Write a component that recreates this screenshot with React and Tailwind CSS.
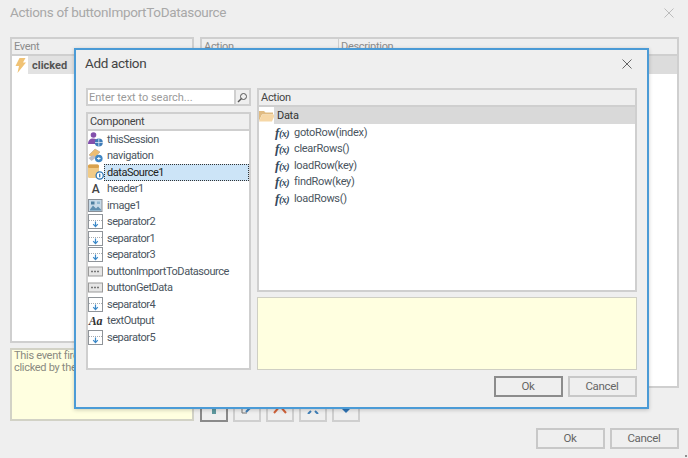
function Sep() {
  return (
    <svg width="15" height="15" viewBox="0 0 15 15" className="shrink-0">
      <rect x="0.5" y="0.5" width="14" height="14" fill="#fff" stroke="#8f9499" />
      <path d="M1 6.5h13" stroke="#a8adb2" strokeDasharray="1 1" />
      <path d="M7.5 7.5v5M5.2 10.2l2.3 2.5 2.3-2.5" stroke="#3a88c8" strokeWidth="1.2" fill="none" />
    </svg>
  );
}
function Btn() {
  return (
    <svg width="15" height="15" viewBox="0 0 15 15" className="shrink-0">
      <rect x="0.5" y="3" width="14" height="9" fill="#e6e6e6" stroke="#9a9a9a" />
      <path d="M3 7.5h9" stroke="#777" strokeWidth="1.6" strokeDasharray="2 1" />
    </svg>
  );
}
function Session() {
  return (
    <svg width="15" height="15" viewBox="0 0 15 15" className="shrink-0">
      <circle cx="5.5" cy="3" r="2.8" fill="#8350ac" />
      <path d="M0 12c0-3.5 2-5.5 5-5.5s4 1 4 3v2.5z" fill="#8350ac" />
      <circle cx="10.8" cy="10.5" r="4" fill="#3f7cb8" />
      <path d="M7 10.5h8M10.8 6.5v8" stroke="#dbe8f4" strokeWidth="0.8" />
    </svg>
  );
}
function Nav() {
  return (
    <svg width="15" height="15" viewBox="0 0 15 15" className="shrink-0">
      <path d="M1 7l6-6 5 3-6 6z" fill="#edbd72" stroke="#b8a58a" strokeWidth="0.6" />
      <path d="M0.5 10l5-3 2 3-4 3z" fill="#bcbcc6" />
      <circle cx="10.8" cy="10.5" r="3.8" fill="#3f86c4" />
      <path d="M9 10.5h3.6M10.8 9v3" stroke="#fff" strokeWidth="0.9" />
    </svg>
  );
}
function Ds() {
  return (
    <svg width="16" height="16" viewBox="0 0 16 16" className="shrink-0">
      <rect x="0" y="0.5" width="11" height="13.5" rx="1.5" fill="#f0cb88" />
      <rect x="0" y="0.5" width="11" height="3.5" rx="1.5" fill="#d9a24e" />
      <circle cx="11.7" cy="11.5" r="3.6" fill="#fff" stroke="#2d78b8" strokeWidth="1.3" />
      <path d="M11.7 9.8v3.4" stroke="#2d78b8" strokeWidth="1.3" />
    </svg>
  );
}
function Img() {
  return (
    <svg width="15" height="15" viewBox="0 0 15 15" className="shrink-0">
      <rect x="0.5" y="1.5" width="13.5" height="12" fill="#c7dae8" stroke="#8a9098" />
      <path d="M2 11.5l3-4 3 3 2-2 3 3v1H2z" fill="#5f8fb0" />
      <rect x="3" y="3.5" width="3.5" height="3" fill="#4e7f9f" />
      <rect x="9" y="3.5" width="3" height="2.5" fill="#8fb7d0" />
    </svg>
  );
}
function Folder() {
  return (
    <svg width="16" height="12" viewBox="0 0 16 12" className="shrink-0">
      <path d="M0 1h5l1.5 1.5H14v2H3L0 11z" fill="#e0bb82" />
      <path d="M3 4.5h13L13 11.5H0z" fill="#f6d7a6" />
    </svg>
  );
}
function Bolt() {
  return (
    <svg width="11" height="15" viewBox="0 0 11 15" className="shrink-0">
      <path d="M4.5 0h6L8 4.5h3L2.5 15l1.5-7H0.5z" fill="#f0c274" />
    </svg>
  );
}
function X({ size, color }) {
  return (
    <svg width={size} height={size} viewBox="0 0 10 10" className="shrink-0">
      <path d="M0.5 0.5l9 9M9.5 0.5l-9 9" stroke={color} strokeWidth="0.9" fill="none" />
    </svg>
  );
}
function Fx() {
  return (
    <span className="flex w-[19px] shrink-0 items-baseline font-['Liberation_Serif',serif] font-bold italic text-[#34495e]">
      <span className="text-[13px]">f</span>
      <span className="text-[10px] tracking-[-0.5px]">(x)</span>
    </span>
  );
}

const components = [
  ["thisSession", <Session />],
  ["navigation", <Nav />],
  ["dataSource1", <Ds />],
  ["header1", <span className="w-[15px] text-center text-[12px] font-medium text-[#444]">A</span>],
  ["image1", <Img />],
  ["separator2", <Sep />],
  ["separator1", <Sep />],
  ["separator3", <Sep />],
  ["buttonImportToDatasource", <Btn />],
  ["buttonGetData", <Btn />],
  ["separator4", <Sep />],
  ["textOutput", <span className="w-[15px] text-center font-['Liberation_Serif',serif] text-[12px] font-bold italic leading-none text-[#333]">Aa</span>],
  ["separator5", <Sep />],
];

const actions = ["gotoRow(index)", "clearRows()", "loadRow(key)", "findRow(key)", "loadRows()"];

function FButton({ label, strong }) {
  return (
    <div className={`flex h-[21px] w-[69px] items-center justify-center border-2 bg-[#efefef] pr-px text-[11.5px] text-[#666] ${strong ? "border-[#8c8c8c]" : "border-[#c8c8c8]"}`}>
      {label}
    </div>
  );
}

function ToolBtn({ strong, children }) {
  return (
    <div className={`flex h-[19px] w-[28px] items-end justify-center border-2 pb-[6px] ${strong ? "border-[#8a8a8a]" : "border-[#cfcfcf]"}`}>
      {children}
    </div>
  );
}

export default function App() {
  return (
    <div className="relative h-[458px] w-[688px] overflow-hidden bg-[#efefef] font-['Roboto',sans-serif] text-[11px] leading-none tracking-[-0.3px]">
      {/* background dialog */}
      <div className="flex h-full flex-col pl-[10px] pr-[9px]">
        <div className="flex h-[37px] shrink-0 items-center justify-between pb-[11px] pr-[5px]">
          <span className="text-[13.5px] tracking-[-0.33px] text-[#a8a8a8]">Actions of buttonImportToDatasource</span>
          <X size={10} color="#b5b5b5" />
        </div>
        <div className="flex gap-[6px]">
          <div className="flex w-[184px] shrink-0 flex-col gap-[5px]">
            <div className="h-[306px] border-2 border-[#cfcfcf] bg-white">
              <div className="flex h-[17px] items-center border-b-2 border-[#cfcfcf] bg-[#efefef] pl-[2px] text-[#8c8c8c]">Event</div>
              <div className="flex h-[18px] items-center">
                <span className="ml-[3px] w-[13px]"><Bolt /></span>
                <span className="flex h-full flex-1 items-center bg-[#e2e2e2] pl-[4px] font-bold tracking-normal text-[#555]">clicked</span>
              </div>
            </div>
            <div className="h-[73px] border-2 border-[#d2d2c6] bg-[#ffffe0] pl-[2px] text-[11px] leading-[12px] text-[#8a8a80]">
              This event fires when the button is clicked by the user
            </div>
          </div>
          <div className="flex flex-1 flex-col">
            <div className="h-[351px] border-2 border-[#cfcfcf] bg-white">
              <div className="flex h-[17px] border-b-2 border-[#cfcfcf] bg-[#efefef] text-[#8c8c8c]">
                <span className="flex w-[137px] items-center border-r border-[#cfcfcf] pl-[2px]">Action</span>
                <span className="flex items-center pl-[2px]">Description</span>
              </div>
              <div className="h-[18px] bg-[#dcdcdc]" />
            </div>
            <div className="mt-[15px] flex gap-[5px]">
              <ToolBtn strong>
                <svg width="10" height="10" viewBox="0 0 10 10"><path d="M3 0h4v10H3z" fill="#5f9aa0" /></svg>
              </ToolBtn>
              <ToolBtn>
                <svg width="14" height="10" viewBox="0 0 14 10"><path d="M2 3v6h5" stroke="#777" fill="none" /><path d="M6 8l6-6" stroke="#3f7fb8" strokeWidth="2.2" /></svg>
              </ToolBtn>
              <ToolBtn>
                <svg width="14" height="10" viewBox="0 0 14 10"><path d="M1 9l6-7 6 7" stroke="#d2623a" strokeWidth="2" fill="none" /></svg>
              </ToolBtn>
              <ToolBtn>
                <svg width="12" height="8" viewBox="0 0 12 8"><path d="M1 8l3-3M11 8L8 5" stroke="#3f7fb8" strokeWidth="2" fill="none" /></svg>
              </ToolBtn>
              <ToolBtn>
                <svg width="12" height="10" viewBox="0 0 12 10"><path d="M0 3h12L6 9z" fill="#2f74b5" /></svg>
              </ToolBtn>
            </div>
            <div className="mt-[6px] flex justify-end gap-[5px]">
              <FButton label="Ok" />
              <FButton label="Cancel" />
            </div>
          </div>
        </div>
      </div>

      {/* resize grip */}
      <div className="absolute bottom-px right-px size-[2px] bg-[#8f8f8f]" />

      {/* modal */}
      <div className="absolute left-[74px] top-[48px] flex h-[361px] w-[575px] flex-col border-2 border-[#4b9bd6] bg-[#efefef] shadow-[0_1px_4px_rgba(0,0,0,0.2)]">
        <div className="flex h-[38px] shrink-0 items-center justify-between pb-[11px] pl-[9px] pr-[15px]">
          <span className="text-[13.5px] tracking-[-0.33px] text-[#444]">Add action</span>
          <X size={10} color="#555" />
        </div>
        <div className="flex gap-[6px] px-[10px]">
          {/* left */}
          <div className="flex w-[165px] shrink-0 flex-col gap-[6px]">
            <div className="flex h-[18px] border-2 border-[#cfcfcf] bg-white">
              <span className="flex flex-1 items-center pl-px tracking-normal text-[#9a9a9a]">Enter text to search...</span>
              <span className="flex w-[15px] items-center justify-center border-l-2 border-[#cfcfcf] bg-[#efefef]">
                <svg width="11" height="11" viewBox="0 0 11 11">
                  <circle cx="6.5" cy="4.5" r="3" fill="none" stroke="#555" />
                  <path d="M4.5 6.5L1 10" stroke="#555" strokeWidth="1.4" />
                </svg>
              </span>
            </div>
            <div className="flex h-[258px] flex-col border-2 border-[#cfcfcf] bg-white">
              <div className="flex h-[17px] shrink-0 items-center border-b-2 border-[#cfcfcf] bg-[#efefef] pl-[2px] text-[#444]">Component</div>
              {components.map(([name, icon]) => (
                <div key={name} className="flex h-[16.5px] shrink-0 items-center">
                  <span className="flex w-[16px] shrink-0 justify-start">{icon}</span>
                  <span className={`flex h-full flex-1 items-center tracking-[-0.45px] text-[#4a5560] ${name === "dataSource1" ? "border border-dotted border-[#333] bg-[#cce4f7] pl-[2px] text-[#222]" : "pl-[3px]"}`}>{name}</span>
                </div>
              ))}
            </div>
          </div>
          {/* right */}
          <div className="flex flex-1 flex-col gap-[5px]">
            <div className="flex h-[204px] flex-col border-2 border-[#cfcfcf] bg-white">
              <div className="flex h-[17px] shrink-0 items-center border-b-2 border-[#cfcfcf] bg-[#efefef] pl-[2px] text-[#444]">Action</div>
              <div className="flex h-[17px] shrink-0 items-center">
                <span className="w-[15px] shrink-0"><Folder /></span>
                <span className="flex h-full flex-1 items-center bg-[#d9d9d9] pl-[3px] text-[#333]">Data</span>
              </div>
              {actions.map((a) => (
                <div key={a} className="flex h-[16.5px] shrink-0 items-center pl-[16px] text-[#4a5560]">
                  <Fx />
                  <span>{a}</span>
                </div>
              ))}
            </div>
            <div className="h-[73px] border border-[#cfcfc4] bg-[#ffffe0]" />
          </div>
        </div>
        <div className="mt-[6px] flex justify-end gap-[5px] pr-[10px]">
          <FButton label="Ok" strong />
          <FButton label="Cancel" />
        </div>
      </div>
    </div>
  );
}
